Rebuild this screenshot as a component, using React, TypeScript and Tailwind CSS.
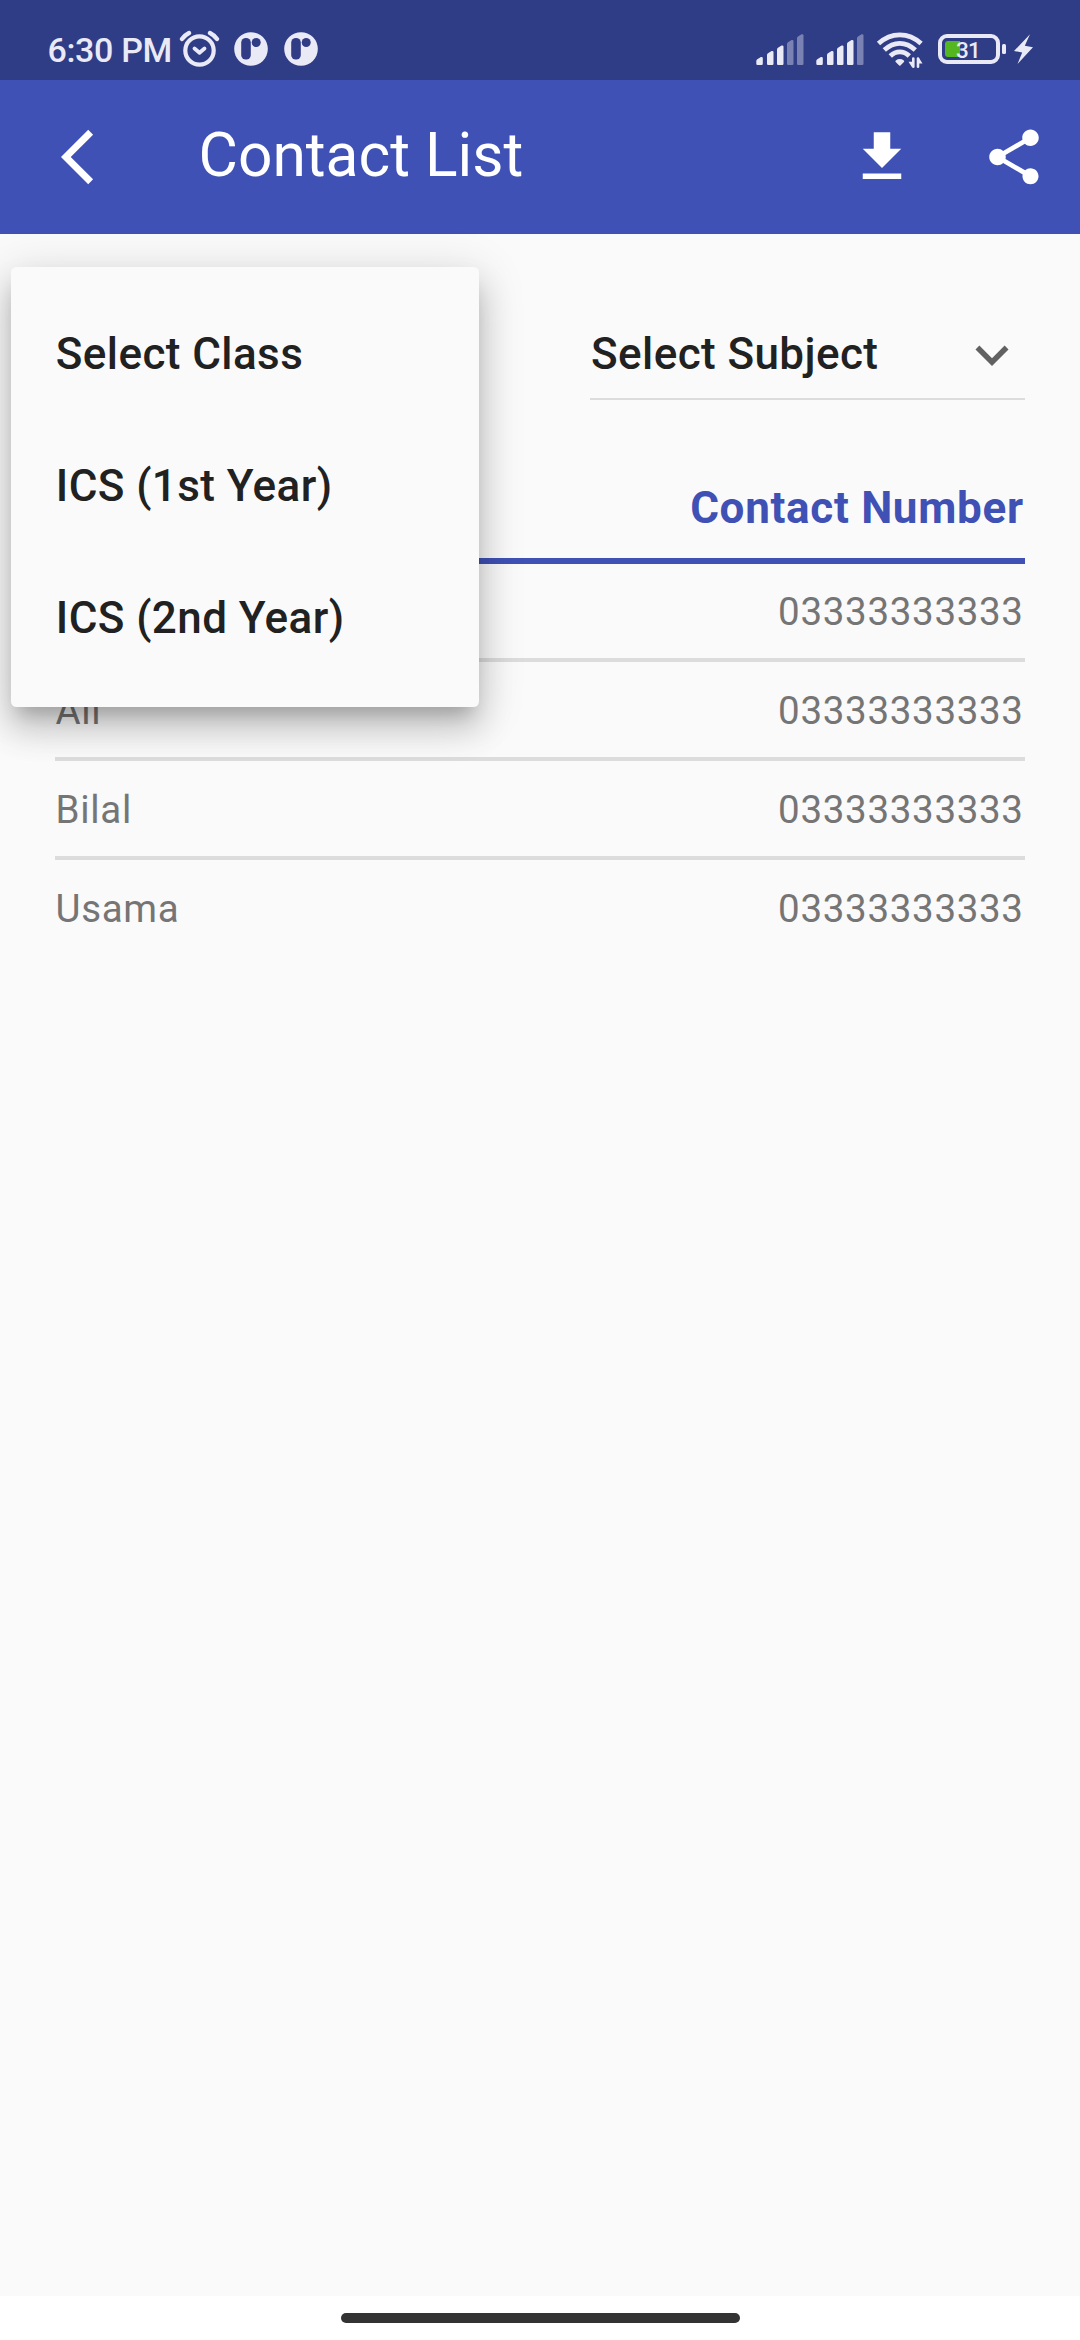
import type { ReactNode } from "react";

const contacts = [
  { name: "", number: "03333333333" },
  { name: "Ali", number: "03333333333" },
  { name: "Bilal", number: "03333333333" },
  { name: "Usama", number: "03333333333" },
];

const classes = ["Select Class", "ICS (1st Year)", "ICS (2nd Year)"];

function MaterialIcon({ children, className = "" }: { children: ReactNode; className?: string }) {
  return (
    <svg viewBox="0 0 24 24" className={`size-[66px] shrink-0 ${className}`} fill="currentColor">
      {children}
    </svg>
  );
}

function AlarmIcon() {
  return (
    <svg viewBox="179 30 41 38" className="ml-[6.5px] h-[38px] w-[41px]" fill="none" stroke="#e9eaf6">
      <circle cx="199.5" cy="50.5" r="14.2" strokeWidth="4.2" />
      <path d="M182 39q3-4 7-6M217 39q-3-4-7-6" strokeWidth="4.4" strokeLinecap="round" />
      <path d="M194.5 48.5l5 4.2 5-4.2" strokeWidth="3.8" strokeLinecap="round" strokeLinejoin="round" />
    </svg>
  );
}

function AppBadge({ className }: { className: string }) {
  return (
    <svg viewBox="0 0 34 34" className={`size-[34px] ${className}`}>
      <circle cx="17" cy="17" r="16.8" fill="#e9eaf6" />
      <rect x="7.2" y="6" width="9.6" height="21.6" rx="4.6" fill="#303c85" />
      <circle cx="22.2" cy="10.5" r="4.5" fill="#303c85" />
    </svg>
  );
}

const bars = [
  { x: 0, y: 24 },
  { x: 10.7, y: 18 },
  { x: 20.7, y: 12.5 },
  { x: 30.7, y: 7 },
  { x: 40.7, y: 1.3 },
];

function Signal({ level, className = "" }: { level: number; className?: string }) {
  return (
    <svg viewBox="0 0 48 32" className={`h-[32px] w-[48px] ${className}`} fill="#e9eaf6">
      {bars.map((b, i) => (
        <path
          key={b.x}
          opacity={i < level ? 1 : 0.4}
          d={`M${b.x + 0.3} ${b.y + 4}q0-1.2 1-1.8l3.6-2.2q1.8-.5 1.9 1V30.7q0 1.2-1.2 1.2h-4.1q-1.2 0-1.2-1.2z`}
        />
      ))}
    </svg>
  );
}

function WifiIcon() {
  return (
    <svg viewBox="876 30 48 38" className="ml-[12px] h-[38px] w-[48px]" fill="none" stroke="#e9eaf6" strokeWidth="4.8">
      <path d="M878.5 43.5Q888 34.8 899.8 34.8T921.1 43.5" />
      <path d="M884.3 50Q891.5 43.3 899.8 43.3T915.3 50" />
      <path d="M890.3 56Q894.5 51.9 899.8 51.9T909.3 56" />
      <path d="M896.3 61.3q3.5-2.6 7 0l-3.5 3.5z" fill="#e9eaf6" strokeWidth="1.8" strokeLinejoin="round" />
      <path d="M913.3 58.5v8.2M918 66.7V58.5" strokeWidth="2.6" strokeLinecap="round" />
      <path d="M908.5 61.8h3.5v5.4zM922.5 63.4h-3.5v-5.4z" fill="#e9eaf6" stroke="none" />
    </svg>
  );
}

function Battery() {
  return (
    <div className="ml-[14px] flex items-center pb-[1px]">
      <div className="flex h-[30px] w-[62px] items-center rounded-[9px] border-4 border-[#e9eaf6] pl-[3px]">
        <div className="h-[16px] w-[15px] rounded-l-[3px] bg-[#55b71f]" />
        <span className="-ml-[4px] pt-[2px] text-[22.5px] leading-[22px] font-medium tracking-[-0.7px] text-[#e9eaf6]">
          31
        </span>
      </div>
      <div className="ml-[2px] h-[10px] w-[4px] rounded-[1.5px] bg-[#e9eaf6]" />
    </div>
  );
}

function Bolt() {
  return (
    <svg viewBox="1014 34.5 20 31" className="ml-[8px] h-[31px] w-[20px]" fill="#e9eaf6">
      <path d="M1030 34.7L1014 51.5l8.2 1.4-4.7 11.6L1033 47.7l-8.2-1.4z" />
    </svg>
  );
}

export default function App() {
  return (
    <div className="relative flex h-[2340px] w-[1080px] flex-col overflow-hidden bg-[#fafafa] font-['Roboto',sans-serif]">
      <div className="flex h-[80px] shrink-0 items-center bg-[#2f3c86] pt-[18px] pl-[47.5px]">
        <span className="w-[125px] pt-[2px] text-[34px] leading-[38px] font-medium tracking-[-0.35px] whitespace-nowrap text-[#e9eaf6]">
          6:30 PM
        </span>
        <AlarmIcon />
        <AppBadge className="ml-[14px]" />
        <AppBadge className="ml-[16px]" />
        <div className="mr-[46px] ml-auto flex items-center">
          <Signal level={3} />
          <Signal level={4} className="ml-[12px]" />
          <WifiIcon />
          <Battery />
          <Bolt />
        </div>
      </div>

      <header className="flex h-[154px] shrink-0 items-center bg-[#3f51b5] pb-[1px] text-white">
        <MaterialIcon className="ml-[61px]">
          <path d="M11.67 3.87L9.9 2.1 0 12l9.9 9.9 1.77-1.77L3.54 12z" />
        </MaterialIcon>
        <h1 className="ml-[71.5px] pb-[1px] text-[60.5px] leading-[72px] font-normal">Contact List</h1>
        <MaterialIcon className="ml-auto">
          <path d="M19 9h-4V3H9v6H5l7 7 7-7zM5 18v2h14v-2H5z" />
        </MaterialIcon>
        <MaterialIcon className="mr-[33px] ml-[66px]">
          <path d="M18 16.08c-.76 0-1.44.3-1.96.77L8.91 12.7c.05-.23.09-.46.09-.7s-.04-.47-.09-.7l7.05-4.11c.54.5 1.25.81 2.04.81 1.66 0 3-1.34 3-3s-1.34-3-3-3-3 1.34-3 3c0 .24.04.47.09.7L8.04 9.81C7.5 9.31 6.79 9 6 9c-1.66 0-3 1.34-3 3s1.34 3 3 3c.79 0 1.5-.31 2.04-.81l7.12 4.16c-.05.21-.08.43-.08.65 0 1.61 1.31 2.92 2.92 2.92 1.61 0 2.92-1.31 2.92-2.92s-1.31-2.92-2.92-2.92z" />
        </MaterialIcon>
      </header>

      <main className="flex grow flex-col px-[55px] pt-[76px]">
        <div className="ml-auto flex h-[90px] w-[435px] items-center justify-between border-b-2 border-[#dcdcdc] pl-[1px]">
          <span className="text-[44px] leading-[52px] font-medium tracking-[0.41px] text-[#212121]">Select Subject</span>
          <MaterialIcon className="mt-[2px] text-[#616161]">
            <path d="M7.41 8.59L12 13.17l4.59-4.58L18 10l-6 6-6-6 1.41-1.41z" />
          </MaterialIcon>
        </div>

        <div className="mt-[58px] flex h-[106px] justify-end border-b-[6px] border-[#3f51b5] pt-[24px] pr-[1.3px] text-[44px] leading-[52px] font-bold tracking-[0.69px] text-[#3f51b5]">
          <span>Contact Number</span>
        </div>
        <ul>
          {contacts.map((c, i) => (
            <li
              key={i}
              className="flex h-[99px] justify-between border-b-4 border-[#dcdcdc] pt-[26px] pr-[1.3px] text-[38.5px] leading-[46px] tracking-[0.69px] text-[#757575] first:h-[98px] first:pt-[25px] last:border-0"
            >
              <span className="pl-[0.5px]">{c.name}</span>
              <span>{c.number}</span>
            </li>
          ))}
        </ul>
      </main>

      <div className="flex h-[44px] shrink-0 justify-center bg-white pt-[17px]">
        <div className="h-[10px] w-[399px] rounded-full bg-[#333333]" />
      </div>

      <ul className="absolute top-[267px] left-[11px] w-[467.5px] rounded-[5.5px] bg-[#fafafa] py-[22px] shadow-[0_14px_17px_-8px_rgba(0,0,0,0.2),0_22px_33px_3px_rgba(0,0,0,0.14),0_8px_46px_5px_rgba(0,0,0,0.12)]">
        {classes.map((label) => (
          <li
            key={label}
            className="flex h-[132px] items-center pb-[3px] pl-[44.8px] text-[44px] leading-[52px] font-medium tracking-[0.41px] text-[#212121]"
          >
            {label}
          </li>
        ))}
      </ul>
    </div>
  );
}
